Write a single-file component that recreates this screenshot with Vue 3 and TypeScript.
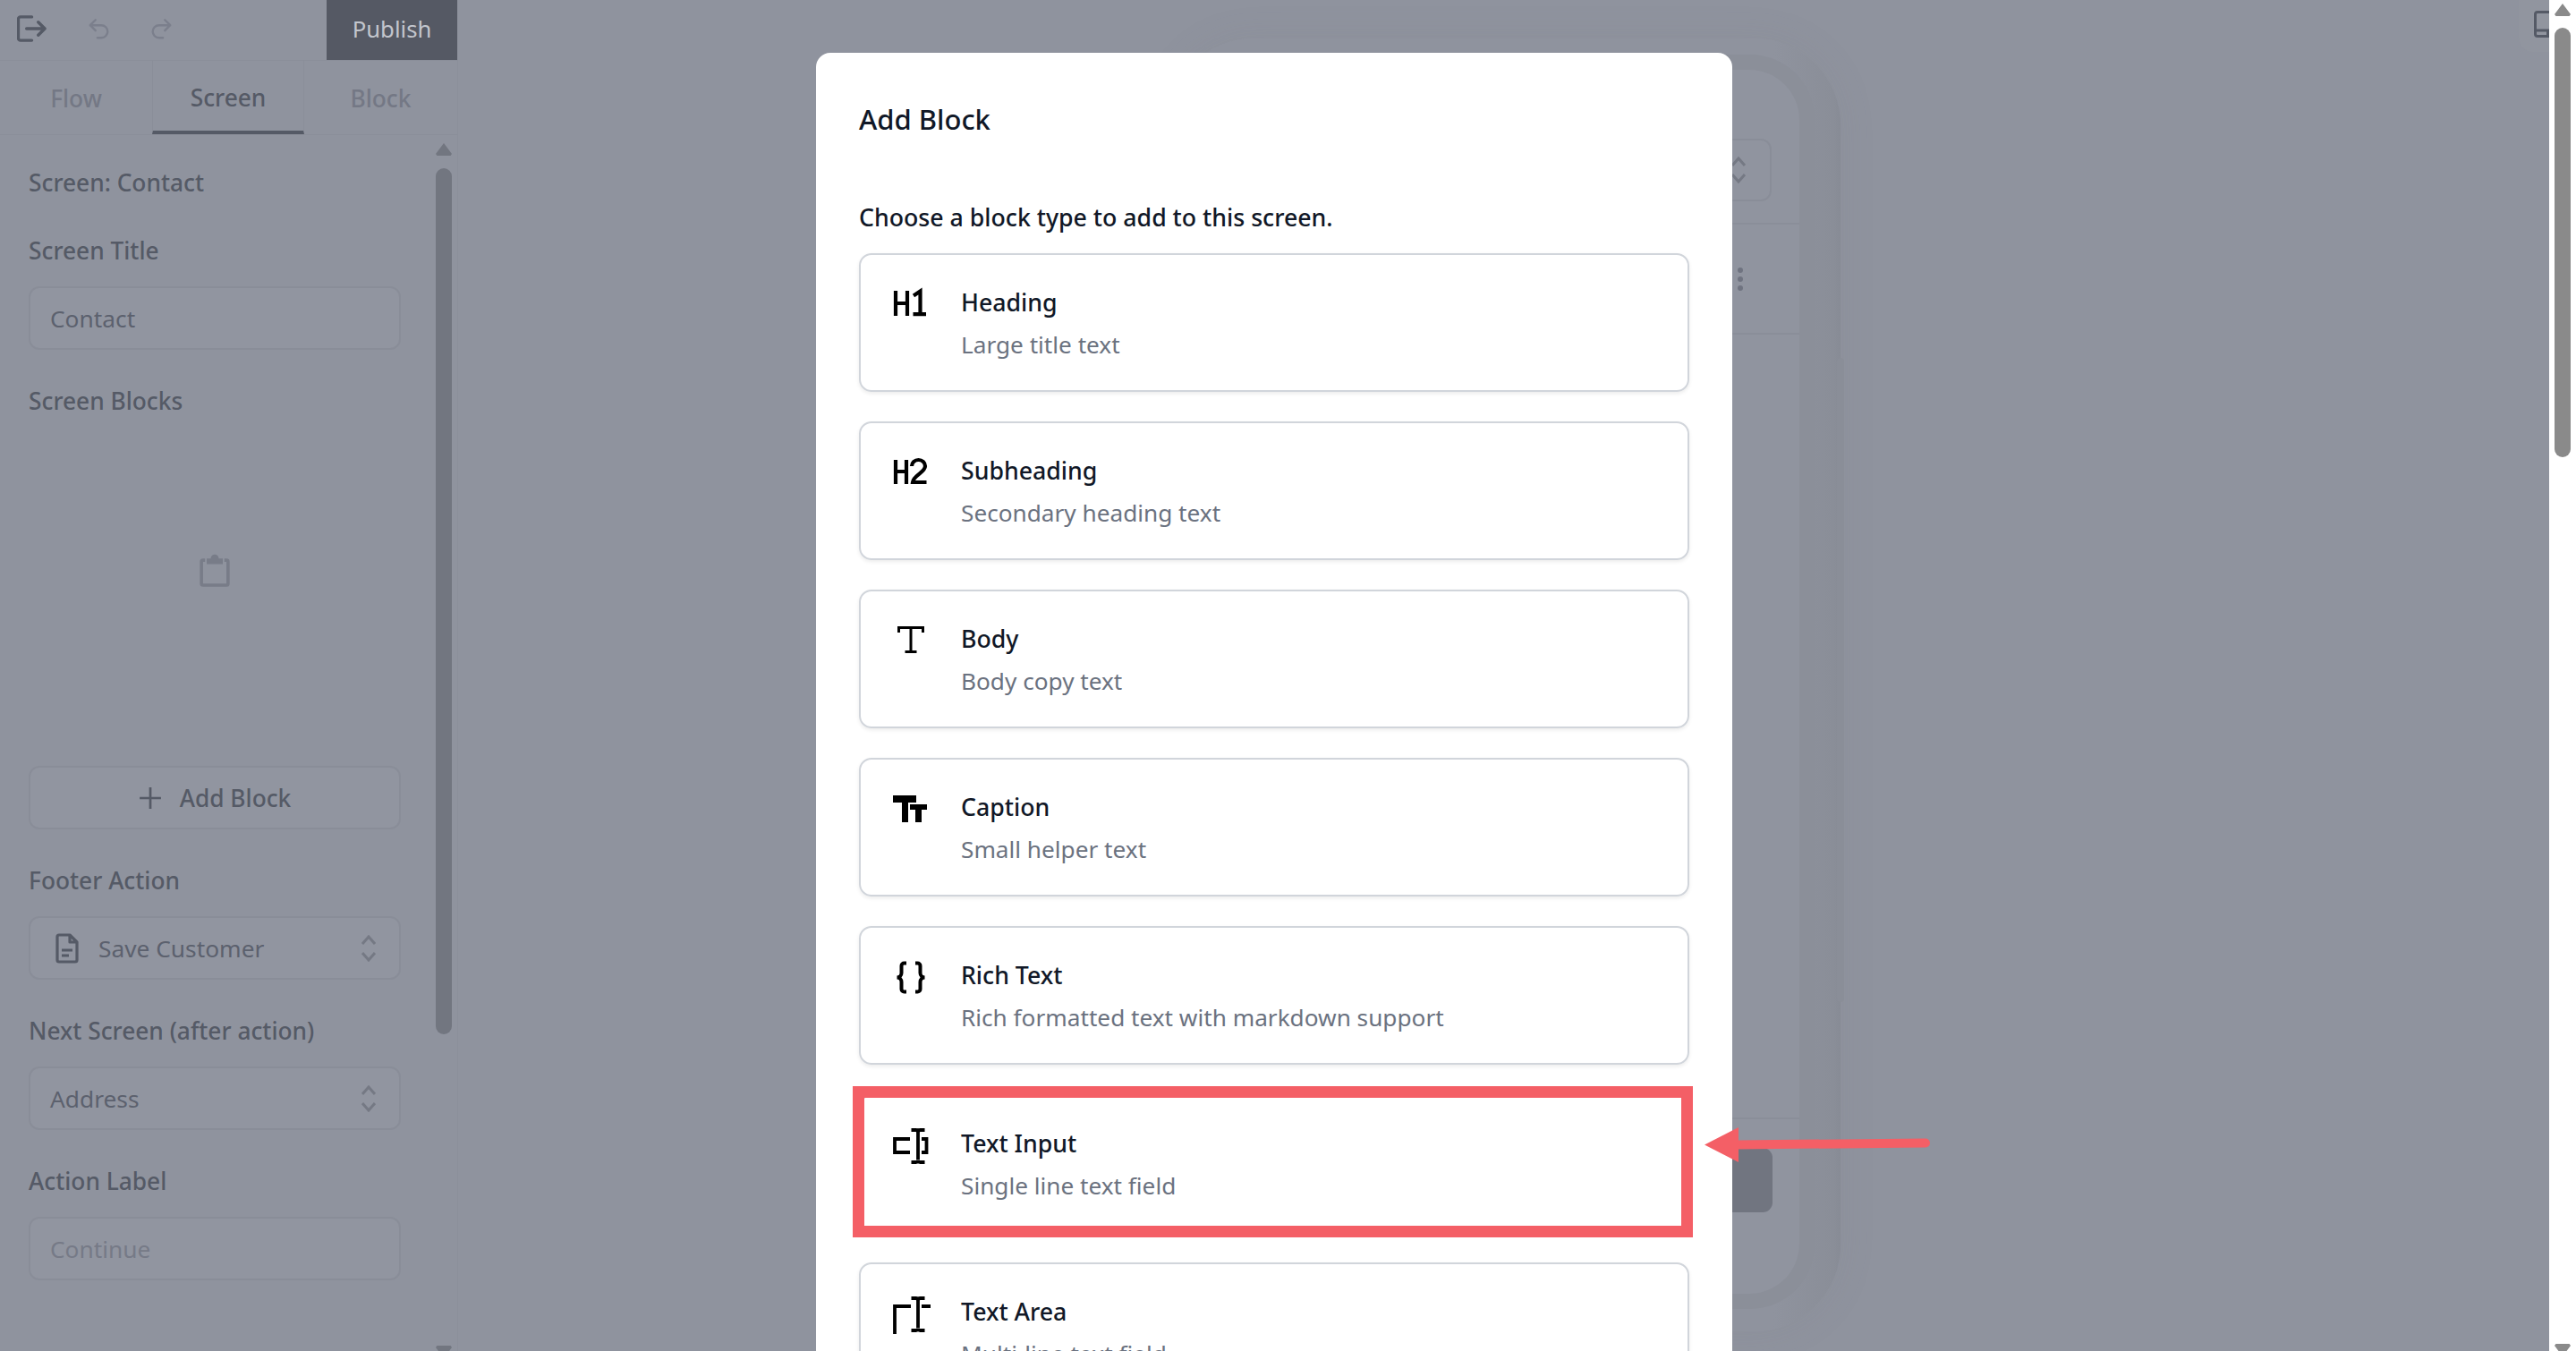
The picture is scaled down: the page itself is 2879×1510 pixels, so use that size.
<script setup lang="ts">
interface BlockType {
  title: string;
  sub: string;
  d: string;
  stroke?: number;
}

const tabs = ["Flow", "Screen", "Block"];

const blockTypes: BlockType[] = [
  {
    title: "Heading",
    sub: "Large title text",
    d: "M3 7v28M16 7v28M3 21h13M23 12.500 30.500 7.500V33M22.500 33.200H37",
    stroke: 4.2,
  },
  {
    title: "Subheading",
    sub: "Secondary heading text",
    d: "M3 8v27M15 8v27M3 21h12M21 15a7.500 7 0 0 1 15 0c0 7-13 10-14 18h15.500",
    stroke: 4.2,
  },
  {
    title: "Body",
    sub: "Body copy text",
    d: "M6.500 13V7.500H33.500V13M20 7.500V34.500M13.500 34.500H26.500",
    stroke: 3,
  },
  {
    title: "Caption",
    sub: "Small helper text",
    d: "M0 7h26v8h-9v22h-7V15H0zM19 17h19v6h-6v14h-7V23h-6z",
  },
  {
    title: "Rich Text",
    sub: "Rich formatted text with markdown support",
    d: "M15 6.500h-2.500a3 3 0 0 0-3 3v8a5 5 0 0 1-5 5 5 5 0 0 1 5 5v8a3 3 0 0 0 3 3H15M25 6.500h2.500a3 3 0 0 1 3 3v8a5 5 0 0 0 5 5 5 5 0 0 0-5 5v8a3 3 0 0 1-3 3H25",
    stroke: 4,
  },
  {
    title: "Text Input",
    sub: "Single line text field",
    d: "M19 15H2v15h17M32 15h5.500v15H32M20.500 5h5q2.500 0 2.500 2.500 0-2.500 2.500-2.500h5M20.500 41h5q2.500 0 2.500-2.500 0 2.500 2.500 2.500h5M28 7v31",
    stroke: 3.8,
  },
  {
    title: "Text Area",
    sub: "Multi-line text field",
    d: "M2 45V14h18M32 14h10M20.500 5h5q2.500 0 2.500 2.500 0-2.500 2.500-2.500h5M20.500 41h5q2.500 0 2.500-2.500 0 2.500 2.500 2.500h5M28 7v31",
    stroke: 3.8,
  },
];
</script>

<template>
  <div class="page">
    <aside class="sidebar">
      <header class="toolbar">
        <div class="toolbar-icons">
          <svg class="exit" viewBox="0 0 34 30" fill="none">
            <path d="M17 1.500H4a2.500 2.500 0 0 0-2.500 2.500v22A2.500 2.500 0 0 0 4 28.500h13M11 15h21M24.500 7.500 32 15l-7.500 7.500" />
          </svg>
          <svg class="history" viewBox="0 0 24 24" fill="none">
            <path d="M9 3 3.500 8.500 9 14M3.500 8.500H15a6.500 6.500 0 0 1 0 13h-4" />
          </svg>
          <svg class="history" viewBox="0 0 24 24" fill="none">
            <path d="M15 3l5.500 5.500L15 14M20.500 8.500H9a6.500 6.500 0 0 0 0 13h4" />
          </svg>
        </div>
        <button class="publish">Publish</button>
      </header>

      <nav class="tabs">
        <div v-for="tab in tabs" :key="tab" class="tab" :class="{ active: tab === 'Screen' }">{{ tab }}</div>
      </nav>

      <div class="panel">
        <div class="panel-body">
          <div class="panel-title">Screen: Contact</div>

          <div class="field">
            <label>Screen Title</label>
            <div class="control">Contact</div>
          </div>

          <div class="field">
            <label>Screen Blocks</label>
            <div class="empty">
              <svg viewBox="0 0 40 44" fill="none">
                <path d="M8 11H5.500a2 2 0 0 0-2 2v27a2 2 0 0 0 2 2h29a2 2 0 0 0 2-2V13a2 2 0 0 0-2-2H32" stroke-width="4" />
                <path d="M10 9h5a5 5 0 0 1 10 0h5v7H10z" class="clip" />
              </svg>
            </div>
            <button class="control add-block">
              <svg viewBox="0 0 24 24" fill="none"><path d="M12 1v22M1 12h22" /></svg>
              Add Block
            </button>
          </div>

          <div class="field">
            <label>Footer Action</label>
            <div class="control select with-icon">
              <svg class="doc" viewBox="0 0 26 34" fill="none">
                <path d="M16 2H4a2 2 0 0 0-2 2v26a2 2 0 0 0 2 2h18a2 2 0 0 0 2-2V10zM16 2v8h8M7 19h12M7 25h8" />
              </svg>
              <span>Save Customer</span>
              <svg class="chevrons" viewBox="0 0 16 30" fill="none"><path d="M1 10 8 2l7 8M1 20l7 8 7-8" /></svg>
            </div>
          </div>

          <div class="field">
            <label>Next Screen (after action)</label>
            <div class="control select">
              <span>Address</span>
              <svg class="chevrons" viewBox="0 0 16 30" fill="none"><path d="M1 10 8 2l7 8M1 20l7 8 7-8" /></svg>
            </div>
          </div>

          <div class="field">
            <label>Action Label</label>
            <div class="control placeholder">Continue</div>
          </div>
        </div>

        <div class="scrollbar panel-scroll">
          <i class="arrow up"></i>
          <i class="thumb"></i>
          <i class="arrow down"></i>
        </div>
      </div>
    </aside>

    <main class="canvas">
      <div class="phone">
        <div class="bezel">
          <div class="screen">
            <div class="screen-head">
              <div class="screen-select">
                <svg class="chevrons" viewBox="0 0 16 30" fill="none"><path d="M1 10 8 2l7 8M1 20l7 8 7-8" /></svg>
              </div>
            </div>
            <div class="screen-row">
              <div class="dots"><i></i><i></i><i></i></div>
            </div>
            <div class="screen-fill"></div>
            <div class="screen-foot">
              <div class="screen-button"></div>
            </div>
          </div>
        </div>
        <i class="phone-scroll"></i>
      </div>

      <div class="device-toggle">
        <svg viewBox="0 0 28 30" fill="none">
          <rect x="1.500" y="1.500" width="30" height="27" rx="2.500" />
          <path d="M1.500 22h14v6.500" />
        </svg>
      </div>
    </main>

    <div class="overlay">
      <section class="modal">
        <h2>Add Block</h2>
        <p class="intro">Choose a block type to add to this screen.</p>
        <div class="cards">
          <article v-for="block in blockTypes" :key="block.title" class="card">
            <svg class="card-icon" viewBox="0 0 40 40">
              <path :d="block.d" :fill="block.stroke ? 'none' : '#000'" :stroke="block.stroke ? '#000' : 'none'" :stroke-width="block.stroke" />
            </svg>
            <div class="card-text">
              <div class="card-title">{{ block.title }}</div>
              <div class="card-sub">{{ block.sub }}</div>
            </div>
          </article>
        </div>
      </section>
    </div>

    <div class="scrollbar page-scroll">
      <i class="arrow up"></i>
      <i class="thumb"></i>
      <i class="arrow down"></i>
    </div>

    <svg class="annotation" viewBox="0 0 2879 1510" fill="none">
      <rect x="959.500" y="1220.500" width="926" height="156" stroke="#f45f66" stroke-width="13" />
      <path d="M1940 1279.500 2152 1277.500" stroke="#f45f66" stroke-width="10" stroke-linecap="round" />
      <path d="M1905 1279.500 1943 1260V1299z" fill="#f45f66" />
    </svg>
  </div>
</template>

<style scoped>
.page {
  position: relative;
  display: flex;
  width: 2879px;
  height: 1510px;
  overflow: hidden;
  background: #8f939e;
  color: #555a66;
  font-family: "Noto Sans", "Open Sans", sans-serif;
  font-size: 26.300px;
}

.sidebar {
  display: flex;
  flex-direction: column;
  flex: none;
  width: 511px;
  border-right: 1px solid #8b8f9a;
  box-sizing: content-box;
}

.toolbar {
  display: flex;
  justify-content: space-between;
  height: 67px;
  border-bottom: 1px solid #8a8e99;
}

.toolbar-icons {
  display: flex;
  align-items: center;
  gap: 45px;
  padding: 0 0 4px 19px;
}

.toolbar svg path {
  stroke-linecap: round;
  stroke-linejoin: round;
}

.exit {
  width: 33px;
  height: 30px;
}

.exit path {
  stroke: #555a66;
  stroke-width: 3.500;
}

.history {
  width: 26px;
  height: 26px;
}

.history path {
  stroke: #7b7f8c;
  stroke-width: 2.200;
}

.publish {
  width: 146px;
  height: 67px;
  padding: 0 0 3px;
  border: 0;
  background: #555964;
  color: #c3c6cd;
  font: inherit;
  font-size: 25.700px;
}

.tabs {
  display: grid;
  grid-template-columns: 170px 170px 171px;
  height: 82px;
  border-bottom: 1px solid #8a8e99;
}

.tab {
  display: flex;
  align-items: center;
  justify-content: center;
  padding-top: 2px;
  color: #747885;
  font-weight: 500;
}

.tab.active {
  border-right: 1px solid #8a8e99;
  border-bottom: 4px solid #555a66;
  border-left: 1px solid #8a8e99;
  padding-top: 4px;
  color: #555a66;
}

.panel {
  position: relative;
  flex: 1;
  display: flex;
  justify-content: space-between;
  min-height: 0;
}

.panel-body {
  width: 416px;
  margin-left: 32px;
  padding-top: 36px;
}

.panel-title,
.field label {
  display: block;
  height: 36px;
  line-height: 35px;
  font-weight: 500;
}

.field {
  margin-top: 40px;
}

.control {
  box-sizing: border-box;
  display: flex;
  align-items: center;
  width: 416px;
  height: 71px;
  margin-top: 21px;
  padding: 0 22px;
  border: 2px solid #898d98;
  border-radius: 12px;
  background: #9195a0;
  color: #5c616e;
}

.placeholder {
  color: #767a87;
}

.empty {
  display: flex;
  justify-content: center;
  height: 389px;
  padding-top: 149px;
  box-sizing: border-box;
}

.empty svg {
  width: 36px;
  height: 40px;
}

.empty path {
  stroke: #787c88;
}

.empty .clip {
  fill: #787c88;
  stroke: none;
}

.add-block {
  justify-content: center;
  gap: 20px;
  margin-top: 0;
  color: #555a66;
  font: inherit;
  font-weight: 500;
}

.add-block svg {
  width: 26px;
  height: 26px;
}

.add-block path {
  stroke: #555a66;
  stroke-width: 2.500;
}

.select {
  justify-content: space-between;
}

.with-icon {
  padding-left: 28px;
}

.with-icon span {
  flex: 1;
  margin-left: 22px;
}

.doc {
  width: 26px;
  height: 34px;
}

.doc path {
  stroke: #555a66;
  stroke-width: 3.200;
  stroke-linejoin: round;
}

.chevrons {
  width: 16px;
  height: 30px;
  margin-right: 4px;
}

.chevrons path {
  stroke: #757984;
  stroke-width: 3;
}

.scrollbar {
  display: flex;
  flex-direction: column;
  align-items: center;
  flex: none;
  box-sizing: border-box;
  overflow: hidden;
}

.scrollbar .thumb {
  display: block;
  flex: none;
  width: 18px;
  border-radius: 9px;
  background: var(--bar);
}

.scrollbar .arrow {
  display: block;
  flex: none;
  width: 18px;
  height: 14px;
  background: var(--bar);
}

.scrollbar .up {
  clip-path: polygon(50% 0, 100% 85%, 92% 100%, 8% 100%, 0 85%);
}

.scrollbar .down {
  clip-path: polygon(8% 0, 92% 0, 100% 15%, 50% 100%, 0 15%);
}

.panel-scroll {
  --bar: #727680;
  width: 18px;
  margin-right: 6px;
  padding-top: 9px;
}

.panel-scroll .thumb {
  height: 968px;
  margin: 14px 0 348px;
}

.canvas {
  position: relative;
  flex: 1;
  display: flex;
  justify-content: center;
  padding-top: 43px;
  min-width: 0;
}

.phone {
  position: relative;
  display: flex;
  flex-direction: column;
  width: 752px;
  height: 1445px;
  padding: 18px 29px 25px;
  box-sizing: border-box;
  border-radius: 96px;
  background: linear-gradient(90deg, #8f939e 90%, #8a8e98 99%, #878b95 100%);
  box-shadow: 0 0 40px rgba(120, 124, 135, 0.12);
}

.bezel {
  flex: 1;
  display: flex;
  padding: 17px;
  border-radius: 72px;
  background: #8b8f99;
  box-sizing: border-box;
}

.screen {
  flex: 1;
  display: flex;
  flex-direction: column;
  border-radius: 56px;
  background: #90949f;
  overflow: hidden;
}

.screen-head {
  box-sizing: border-box;
  height: 173px;
  padding: 77px 31px 0;
  border-bottom: 2px solid #8a8e99;
}

.screen-select {
  box-sizing: border-box;
  display: flex;
  align-items: center;
  justify-content: flex-end;
  height: 70px;
  padding-right: 23px;
  border: 2px solid #898d98;
  border-radius: 12px;
}

.screen-row {
  box-sizing: border-box;
  display: flex;
  align-items: center;
  justify-content: flex-end;
  height: 123px;
  padding-right: 63px;
  border-bottom: 2px solid #8a8e99;
}

.dots {
  display: flex;
  flex-direction: column;
  gap: 4px;
}

.dots i {
  display: block;
  width: 6px;
  height: 6px;
  border-radius: 50%;
  background: #6f7380;
}

.screen-fill {
  flex: 1;
  border-bottom: 2px solid #8a8e99;
}

.screen-foot {
  padding: 32px 30px 91px;
}

.screen-button {
  height: 72px;
  border-radius: 11px;
  background: #717580;
}

.phone-scroll {
  position: absolute;
  top: 357px;
  right: -4px;
  width: 8px;
  height: 720px;
  border-radius: 4px;
  background: #8a8e98;
}

.device-toggle {
  position: absolute;
  top: 0;
  right: 0;
  width: 34px;
  height: 58px;
  padding: 12px 0 0 17px;
  box-sizing: border-box;
  border-bottom-left-radius: 16px;
  background: #91959f;
  overflow: hidden;
}

.device-toggle svg {
  display: block;
  width: 28px;
  height: 30px;
  overflow: visible;
}

.device-toggle rect,
.device-toggle path {
  stroke: #555a66;
  stroke-width: 3;
}

.overlay {
  position: absolute;
  inset: 0 31px 0 0;
  display: flex;
  justify-content: center;
  padding-top: 59px;
}

.modal {
  box-sizing: border-box;
  width: 1024px;
  padding: 54px 48px 0;
  border-radius: 16px 16px 0 0;
  background: #fff;
  color: #111827;
}

.modal h2 {
  margin: 0;
  font-size: 31px;
  font-weight: 500;
  line-height: 40px;
}

.intro {
  margin: 72px 0 22px;
  font-size: 26.700px;
  font-weight: 500;
  line-height: 36px;
}

.cards {
  display: flex;
  flex-direction: column;
  gap: 33px;
}

.card {
  box-sizing: border-box;
  display: flex;
  flex: none;
  gap: 36px;
  height: 155px;
  padding: 35px 36px;
  border: 2px solid #d1d5db;
  border-radius: 14px;
  box-shadow: 0 2px 4px rgba(0, 0, 0, 0.08);
}

.card-icon {
  flex: none;
  width: 40px;
  height: 40px;
  margin-top: -2px;
  overflow: visible;
}

.card-title {
  font-size: 26.700px;
  font-weight: 500;
  line-height: 36px;
}

.card-sub {
  margin-top: 12px;
  color: #6b7280;
  font-size: 26.200px;
  line-height: 35px;
}

.page-scroll {
  --bar: #8a8a8a;
  position: relative;
  width: 30px;
  padding-top: 4px;
  background: #fff;
}

.page-scroll .thumb {
  height: 480px;
  margin: 13px 0 991px;
}

.annotation {
  position: absolute;
  inset: 0;
  width: 2879px;
  height: 1510px;
  pointer-events: none;
}
</style>

<style>
html,
body {
  margin: 0;
  overflow: hidden;
}
</style>
